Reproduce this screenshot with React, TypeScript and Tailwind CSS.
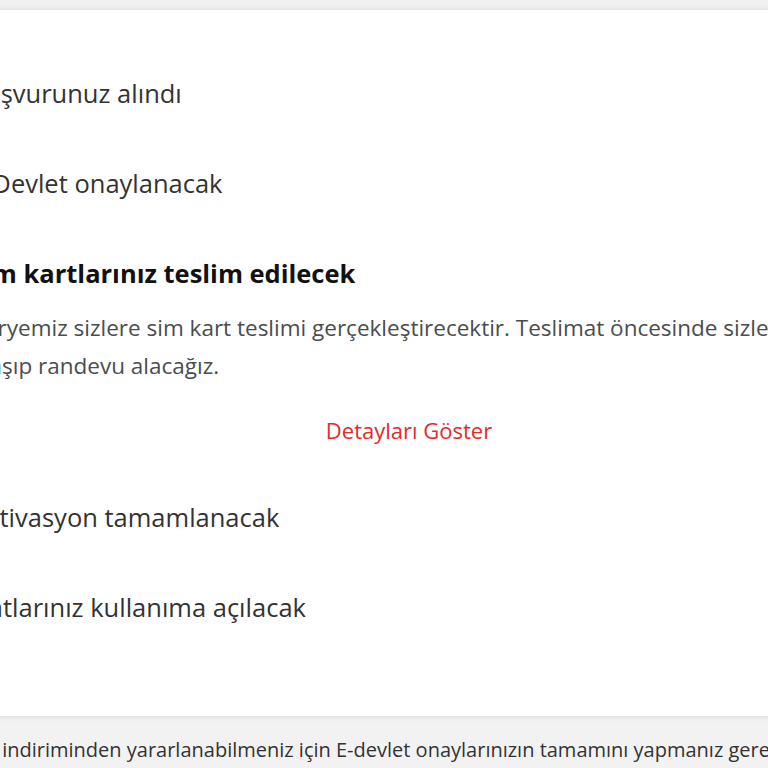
import React from 'react'

interface Step {
  title: string
  active?: boolean
  body?: string[]
  link?: string
}

const steps: Step[] = [
  { title: 'Başvurunuz alındı' },
  { title: 'E-Devlet onaylanacak' },
  {
    title: 'Sim kartlarınız teslim edilecek',
    active: true,
    body: [
      'Kuryemiz sizlere sim kart teslimi gerçekleştirecektir. Teslimat öncesinde sizlere',
      'ulaşıp randevu alacağız.',
    ],
    link: 'Detayları Göster',
  },
  { title: 'Aktivasyon tamamlanacak' },
  { title: 'Hatlarınız kullanıma açılacak' },
]

export default function App() {
  return (
    <div
      className="w-[768px] h-[768px] overflow-hidden bg-[#f2f2f2] pt-[10px]"
      style={{ fontFamily: '"Open Sans", Lato, sans-serif' }}
    >
      {/* Card */}
      <div className="bg-white shadow-[0_0_6px_rgba(0,0,0,0.12)] w-[900px] -ml-[20px] pt-[38px] pb-[64px]">
        <div className="-ml-[10px] w-[878px] flex flex-col">
          {steps.map(step => (
            <div key={step.title} className={step.active ? 'pt-[30px] pb-[27px]' : 'py-[30px]'}>
              <div
                className={
                  step.active
                    ? 'text-[25.5px] leading-[30px] font-bold text-[#111111] whitespace-nowrap'
                    : 'text-[25.5px] leading-[30px] text-[#333333] whitespace-nowrap'
                }
              >
                {step.title}
              </div>
              {step.body && (
                <div className="mt-[21px] text-[22.5px] leading-[38px] text-[#4a4d4e] whitespace-nowrap">
                  {step.body.map(line => (
                    <div key={line}>{line}</div>
                  ))}
                </div>
              )}
              {step.link && (
                <div className="mt-[30px] text-center text-[22px] leading-[30px] text-[#e42b2b]">
                  {step.link}
                </div>
              )}
            </div>
          ))}
        </div>
      </div>

      {/* Footer note */}
      <div className="mt-[22px] -ml-[36px] text-[20px] leading-[24px] text-[#333333] whitespace-nowrap">
        Hat indiriminden yararlanabilmeniz için E-devlet onaylarınızın tamamını yapmanız gerekmektedir.
      </div>
    </div>
  )
}
